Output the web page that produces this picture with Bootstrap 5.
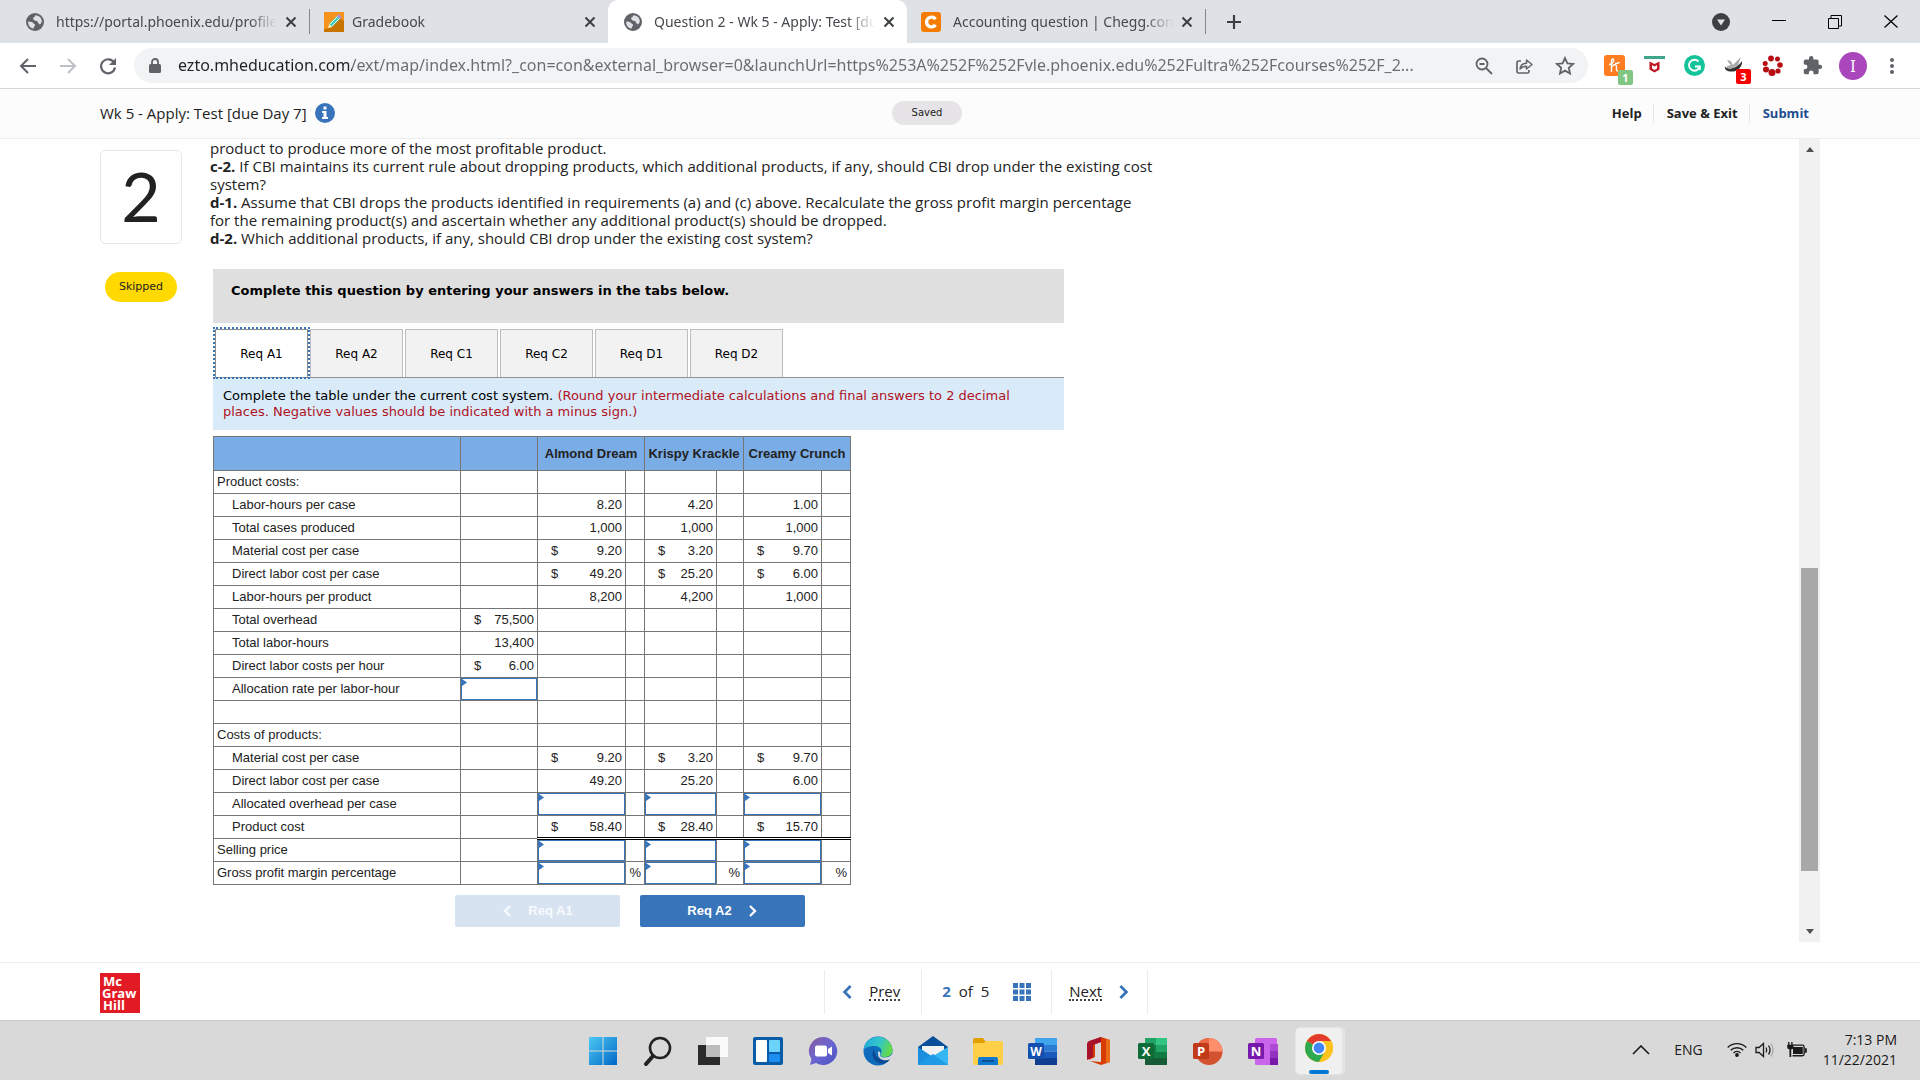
<!DOCTYPE html>
<html lang="en">
<head>
<meta charset="utf-8">
<meta name="viewport" content="width=device-width, initial-scale=1">
<title>Question 2 - Wk 5 - Apply: Test [due Day 7]</title>
<link href="https://cdn.jsdelivr.net/npm/bootstrap@5.3.0/dist/css/bootstrap.min.css" rel="stylesheet">
<style>
  :root { --ui: "Noto Sans", "Open Sans", sans-serif; --body: "Open Sans", "Noto Sans", sans-serif; --verd: "DejaVu Sans", sans-serif; --blue: #3874ba; }
  body { font-family: var(--body); color: #222; background: #fff; min-height: 100vh; }
  button { border: 0; background: none; padding: 0; color: inherit; }
  svg { display: block; flex: none; }

  /* browser tabs */
  .tab-strip { background: #dee1e6; height: 43px; font: 14px/40px var(--ui); color: #45494d; }
  .b-tab { height: 43px; }
  .b-tab .t-label { flex: 1 1 0; min-width: 0; overflow: hidden; white-space: nowrap; -webkit-mask-image: linear-gradient(to left, transparent 0, #000 28px); mask-image: linear-gradient(to left, transparent 0, #000 28px); }
  .b-tab.w-a { width: 309px; padding: 0 12px 0 26px; }
  .b-tab.w-b { width: 298px; padding: 0 12px 0 14px; }
  .b-tab.w-c { width: 299px; padding: 0 12px 0 16px; }
  .b-tab.live { background: #fff; border-radius: 10px 10px 0 0; }
  .t-rule { width: 1px; height: 25px; background: #85898e; }
  .win-btns { gap: 42px; padding-right: 22px; }

  /* toolbar */
  .tool-row { height: 45px; padding-left: 18px; padding-right: 22px; }
  .omni { background: #f1f3f4; border-radius: 18px; height: 35px; padding: 0 13px 0 14px; }
  .omni input { min-width: 0; border: 0; outline: 0; padding: 0; height: 35px; font: 16px/35px var(--ui); color: transparent; background: linear-gradient(to right, #202124 174px, #686c70 174px); -webkit-background-clip: text; background-clip: text; }
  .omni-icons { gap: 22px; }
  .ext-row { gap: 19px; }
  .ext-tag { right: -8px; bottom: -9px; width: 15px; height: 15px; border-radius: 2px; font: 700 11px/15px var(--ui); color: #fff; text-align: center; }
  .face { width: 28px; height: 28px; margin-left: -3px; border-radius: 50%; background: #ab47bc; color: #fff; font: 16px/28px var(--ui); text-align: center; }

  /* assignment header */
  .task-head { display: grid; grid-template-columns: 12fr auto 13fr; height: 51px; background: #fcfcfc; border-top: 1px solid #d5d6d8; border-bottom: 1px solid #ececec; padding: 0 100px 2px; }
  .task-title { font-size: 15px; line-height: 24px; }
  .saved { background: #e6e4e7; border-radius: 12px; width: 70px; height: 24px; font: 10px/23px var(--verd); text-align: center; }
  .head-links a { font: 700 13px/20px var(--body); color: #222; text-decoration: none; padding: 0 11px 0 13px; border-left: 1px solid #e8e8e8; }
  .head-links a:first-child { border: 0; }
  .head-links a:last-child { color: #1d4d8f; }

  /* question */
  .work { padding: 0 100px; overflow: hidden; }
  .q-side { width: 82px; margin-right: 28px; padding-top: 11px; }
  .q-num { height: 94px; border: 1px solid #e6e6e6; border-radius: 5px; font: 68px/90px "Lato", sans-serif; text-align: center; }
  .skipped { width: 72px; height: 30px; margin: 28px auto 0; border-radius: 15px; background: #ffd900; font: 11px/30px var(--verd); text-align: center; }
  .q-text { max-width: 950px; font-size: 15px; line-height: 18px; margin-bottom: 22px; }
  .q-box { width: 851px; margin-left: 3px; font-family: var(--verd); font-size: 13px; color: #000; }
  .q-intro { background: #dfdfdf; height: 54px; padding: 12px 18px; font-weight: 700; line-height: 20px; margin-bottom: 6px; }
  .req-tabs { border-bottom: 1px solid #919191; gap: 2px; padding-left: 2px; list-style: none; margin: 0; }
  .req-tabs button { width: 93px; height: 48px; border: 1px solid #bdbdbd; border-bottom: 0; background: #f2f2f2; font: 12px/48px var(--verd); }
  .req-tabs button.on { background: #fff; border-color: #8c8c8c; outline: 2px dotted var(--blue); outline-offset: 0; position: relative; z-index: 1; }
  .req-note { background: #d9ebf9; height: 52px; padding: 10px; line-height: 16px; margin-bottom: 6px; }
  .req-note span { color: #b0121f; }

  .cost { width: 638px; table-layout: fixed; border-collapse: collapse; font: 13px/16px "Liberation Sans", sans-serif; color: #222; }
  .cost th, .cost td { border: 1px solid #767676; height: 23px; padding: 0 3px; white-space: nowrap; }
  .cost thead th { background: #7aace6; height: 34px; text-align: center; font-weight: 700; padding: 0; }
  .cost tbody th { font-weight: 400; }
  .cost tbody th.in { padding-left: 18px; }
  .cost td { text-align: right; }
  .cost .cur { display: flex; justify-content: space-between; padding-left: 10px; }
  .cost td.ans { padding: 0; position: relative; }
  .cost td.ans input { display: block; width: 100%; height: 22px; border: 1px solid var(--blue); padding: 0 4px; text-align: right; background: #fff; font: inherit; }
  .cost td.ans::before { content: ""; position: absolute; left: 1px; top: 1px; width: 5px; height: 7px; background: var(--blue); clip-path: polygon(0 0, 100% 50%, 0 100%); }
  .cost .sum td:not(:nth-child(2)) { border-top: 1px solid #000; border-bottom: 3px double #000; }
  .cost .sum + tr td.ans input { height: 21px; }

  .step-btns { width: 350px; margin: 10px 0 0 242px; gap: 20px; }
  .step-btns button { width: 165px; height: 32px; border-radius: 2px; background: var(--blue); color: #fff; font: 700 13px/32px "Liberation Sans", sans-serif; }
  .step-btns button:disabled { background: #d7e3f1; color: #f8fafd; }

  .scroller { width: 21px; background: #f1f1f1; height: 803px; }
  .scroller .arr { height: 21px; }
  .scroller .grip { width: 17px; height: 303px; margin: 408px auto 0; background: #a8a8a8; }

  /* pager */
  .pager { border-top: 1px solid #ececec; height: 58px; padding: 0 40.2% 0 100px; }
  .mgh { margin-top: 2px; }
  .pager-cells > div { width: 97px; height: 44px; border-left: 1px solid #ececec; font-size: 15px; }
  .pager-cells > div.pos { width: 130px; }
  .pager-cells > div:last-child { border-right: 1px solid #ececec; }
  .pager a { color: #222; text-decoration: none; border-bottom: 2px dotted #444; line-height: 16px; }

  /* desktop taskbar */
  .win-bar { height: 60px; background: #d9d9d9; border-top: 1px solid #c9c9c9; padding: 0 23px 0 588px; color: #1a1a1a; }
  .app-row { gap: 25px; }
  .chrome-slot { width: 48px; height: 48px; margin-left: -8px; border-radius: 5px; background: #f0f0f0; border: 1px solid #e3e3e3; box-shadow: 2px 0 0 #e6e6e6; }
  .tray { font: 14px/20px var(--body); padding-bottom: 2px; }
</style>
<script src="https://cdn.jsdelivr.net/npm/bootstrap@5.3.0/dist/js/bootstrap.bundle.min.js"></script>
</head>
<body class="d-flex flex-column">

<svg width="0" height="0" class="position-absolute" aria-hidden="true">
  <symbol id="globe" viewBox="0 0 18 18"><circle cx="9" cy="9" r="9" fill="#5f6368"/><path d="M9.5 2.2c-1 .9-.4 1.600-1.500 2-.9.300-1.300 1.200-.6 1.800.6.400.3 1.400 1.300 1.600 1.600.2 3 .3 3.100 1.700.1 1.100 1.400 1 1.900 2.200 1.500-1.200 2.300-2.600 2.100-4.100A6.900 6.900 0 0 0 9.500 2.200zM2.100 8.700C2 12 4 14.900 7.200 15.700c.8-.6.400-1.700 1.300-2.400.9-.6.8-1.900-.3-2.300-1-.3-1.200-1.700-2.600-1.900-1.200-.2-2-.7-3.500-.4z" fill="#dee1e6"/></symbol>
  <symbol id="cross" viewBox="0 0 12 12"><path d="M1.500 1.500l9 9m0-9l-9 9" stroke="#3c4043" stroke-width="2" fill="none"/></symbol>
  <symbol id="chev-l" viewBox="0 0 10 12"><path d="M8 1L3 6l5 5" stroke="currentColor" stroke-width="2.300" fill="none"/></symbol>
  <symbol id="chev-r" viewBox="0 0 10 12"><path d="M2 1l5 5-5 5" stroke="currentColor" stroke-width="2.300" fill="none"/></symbol>
</svg>

<header>
  <div class="tab-strip d-flex align-items-center" role="tablist">
    <div class="b-tab w-a d-flex align-items-center" role="tab">
      <svg width="18" height="18" class="me-2"><use href="#globe"/></svg>
      <span class="t-label ms-1">https://portal.phoenix.edu/profile</span>
      <button type="button" class="ms-2" aria-label="Close tab"><svg width="12" height="12"><use href="#cross"/></svg></button>
    </div>
    <div class="t-rule"></div>
    <div class="b-tab w-b d-flex align-items-center" role="tab">
      <svg width="20" height="20" viewBox="0 0 20 20" class="me-2"><path fill="#f7941d" d="M0 0h20v20H0z"/><path fill="#c87400" d="M6 16L16 6l4 3v11H0v-3z"/><path d="M4.500 15.500l1-4L14 3l3 3-8.500 8.500z" fill="#3fd0c0"/><path d="M6 12l8-8m-6 10l8-8" stroke="#e8fbe0" stroke-width="1"/><path d="M13 4l1.800-1.800 3 3L16 7z" fill="#b58ad8"/><path d="M4 16l1.300-4 3 3z" fill="#fff0b0"/></svg>
      <span class="t-label">Gradebook</span>
      <button type="button" aria-label="Close tab"><svg width="12" height="12"><use href="#cross"/></svg></button>
    </div>
    <div class="b-tab w-c live d-flex align-items-center" role="tab" aria-selected="true">
      <svg width="18" height="18" class="me-2"><use href="#globe"/></svg>
      <span class="t-label ms-1">Question 2 - Wk 5 - Apply: Test [due Day 7]</span>
      <button type="button" class="ms-2" aria-label="Close tab"><svg width="12" height="12"><use href="#cross"/></svg></button>
    </div>
    <div class="b-tab w-b d-flex align-items-center" role="tab">
      <svg width="20" height="20" viewBox="0 0 20 20" class="me-2"><rect width="20" height="20" rx="3" fill="#f57c00"/><path d="M14.500 7.200A4.900 4.900 0 1 0 14.500 12.800" fill="none" stroke="#fff" stroke-width="3.400"/></svg>
      <span class="t-label ms-1">Accounting question | Chegg.com</span>
      <button type="button" class="ms-2" aria-label="Close tab"><svg width="12" height="12"><use href="#cross"/></svg></button>
    </div>
    <div class="t-rule"></div>
    <button type="button" class="ms-3 ps-1" aria-label="New tab"><svg width="16" height="16" viewBox="0 0 16 16"><path d="M8 1v14M1 8h14" stroke="#3c4043" stroke-width="2.200"/></svg></button>
    <div class="win-btns d-flex align-items-center ms-auto">
      <svg width="18" height="18" viewBox="0 0 18 18"><circle cx="9" cy="9" r="9" fill="#3c4043"/><path d="M5 6.500h8L9 12.500z" fill="#dee1e6"/></svg>
      <svg width="14" height="14" viewBox="0 0 14 14"><path d="M0 5.500h14" stroke="#000"/></svg>
      <svg width="14" height="14" viewBox="0 0 14 14"><path d="M.5 3.500h10v10H.5zM3 3V.5h10.500V11H11" fill="none" stroke="#000"/></svg>
      <svg width="14" height="14" viewBox="0 0 14 14"><path d="M.5.5l13 12m0-12l-13 12" stroke="#000" stroke-width="1.200"/></svg>
    </div>
  </div>

  <div class="tool-row d-flex align-items-center">
    <button type="button" aria-label="Back"><svg width="20" height="20" viewBox="0 0 20 20"><path d="M18 10H3m7-7l-7 7 7 7" fill="none" stroke="#5f6368" stroke-width="2"/></svg></button>
    <button type="button" class="mx-3 px-1" aria-label="Forward" disabled><svg width="20" height="20" viewBox="0 0 20 20"><path d="M2 10h15m-7-7l7 7-7 7" fill="none" stroke="#bdc1c6" stroke-width="2"/></svg></button>
    <button type="button" class="me-3" aria-label="Reload"><svg width="20" height="20" viewBox="0 0 20 20"><path d="M16 6.500A7 7 0 1 0 17 11.500" fill="none" stroke="#5f6368" stroke-width="2.200"/><path d="M18 2v7h-7z" fill="#5f6368"/></svg></button>
    <label class="omni d-flex align-items-center flex-grow-1">
      <svg width="14" height="16" viewBox="0 0 14 16" class="me-3"><rect x="1" y="6" width="12" height="9" rx="1.500" fill="#5f6368"/><path d="M4 7V4a3 3 0 0 1 6 0v3" fill="none" stroke="#5f6368" stroke-width="1.800"/></svg>
      <input class="flex-grow-1" type="text" aria-label="Address" value="ezto.mheducation.com/ext/map/index.html?_con=con&amp;external_browser=0&amp;launchUrl=https%253A%252F%252Fvle.phoenix.edu%252Fultra%252Fcourses%252F_2...">
      <span class="omni-icons d-flex align-items-center">
        <svg width="18" height="18" viewBox="0 0 18 18"><circle cx="7" cy="7" r="5.500" fill="none" stroke="#5f6368" stroke-width="1.800"/><path d="M11 11l6 6M4.500 7h5" stroke="#5f6368" stroke-width="1.800"/></svg>
        <svg width="18" height="18" viewBox="0 0 18 18"><path d="M6 4H3.500Q2 4 2 5.500v9Q2 16 3.500 16h9q1.500 0 1.500-1.500V13" fill="none" stroke="#5f6368" stroke-width="1.700"/><path d="M5 12c.5-4 3-5.700 6.500-5.700V3L17 7.500 11.500 12V9.200C8.800 9.200 7 10 5 12z" fill="none" stroke="#5f6368" stroke-width="1.500" stroke-linejoin="round"/></svg>
        <svg width="20" height="20" viewBox="0 0 20 20"><path d="M10 2l2.400 5.300 5.700.6-4.300 3.900 1.200 5.700-5-2.900-5 2.900 1.200-5.700L1.900 7.900l5.700-.6z" fill="none" stroke="#5f6368" stroke-width="1.800"/></svg>
      </span>
    </label>
    <div class="ext-row d-flex align-items-center ms-3">
      <span class="position-relative"><svg width="21" height="21" viewBox="0 0 21 21"><rect width="21" height="21" rx="3" fill="#ff7d22"/><path d="M7.500 17V5.500c0-2 3-2 2 .5S6 9.500 5 9.500m2.500 3c1-3 5-4 5-1 0 2-.5 5 1.500 4.500m-3-7.500c3 0 4 0 4.500-1.500" fill="none" stroke="#fff" stroke-width="1.400"/></svg><span class="ext-tag position-absolute" style="background:#81c784">1</span></span>
      <svg width="21" height="21" viewBox="0 0 21 21"><path fill="#3fa58b" d="M0 1h21v3H0z"/><path d="M5.500 6.500l5 2.500 5-2.500v8l-5 3-5-3z" fill="#c01722"/><path d="M8 10l2.500 1.500L13 10v3.500l-2.500 1.500L8 13.500z" fill="#fff"/></svg>
      <svg width="21" height="21" viewBox="0 0 21 21"><circle cx="10.500" cy="10.500" r="10.500" fill="#15c39a"/><path d="M14.500 6.500a5.500 5.500 0 1 0 1.300 5H11m4.800 0V15" fill="none" stroke="#fff" stroke-width="1.900"/></svg>
      <span class="position-relative"><svg width="19" height="19" viewBox="0 0 19 19"><path d="M1 10.500C3 14 13 13 18 5c.5 6-4 10-9 10.500S0 14 1 10.500z" fill="#333"/><path d="M3 4c4 0 5 3 6 5L17 1l-3 8-7 4c-3 0-5-2-4-3l4-1C5 7 4 6 3 4z" fill="#a9a9a9"/></svg><span class="ext-tag position-absolute" style="background:#f90000">3</span></span>
      <svg width="21" height="21" viewBox="0 0 21 21" fill="#b50d12"><circle cx="9" cy="3.500" r="2.900"/><circle cx="15.500" cy="4" r="2.500"/><circle cx="18" cy="10" r="2.800"/><circle cx="16" cy="16" r="2.600"/><circle cx="10" cy="17.500" r="3.500"/><circle cx="4" cy="14.500" r="3"/><circle cx="3.200" cy="8.500" r="2.500"/></svg>
      <svg width="21" height="21" viewBox="0 0 24 24" fill="#5f6368"><path d="M20.500 11H19V7a2 2 0 0 0-2-2h-4V3.500a2.500 2.500 0 0 0-5 0V5H4a2 2 0 0 0-2 2v3.800h1.500a2.700 2.700 0 0 1 0 5.400H2V20c0 1.100.9 2 2 2h3.800v-1.500a2.700 2.700 0 0 1 5.400 0V22H17a2 2 0 0 0 2-2v-4h1.500a2.500 2.500 0 0 0 0-5z"/></svg>
      <div class="face">I</div>
      <svg width="12" height="18" viewBox="0 0 12 18" fill="#5f6368"><circle cx="6" cy="3" r="2"/><circle cx="6" cy="9" r="2"/><circle cx="6" cy="15" r="2"/></svg>
    </div>
  </div>
</header>

<section class="task-head align-items-center">
  <div class="d-flex align-items-center task-title">Wk 5 - Apply: Test [due Day 7]
    <svg width="20" height="20" viewBox="0 0 20 20" class="ms-2"><circle cx="10" cy="10" r="10" fill="#3874ba"/><path d="M8.500 3.500h3v3h-3zM7 8h4.500v6H13v2H7v-2h1.500v-4H7z" fill="#fff"/></svg>
  </div>
  <div class="saved">Saved</div>
  <nav class="head-links d-flex justify-content-end"><a href="#">Help</a><a href="#">Save &amp; Exit</a><a href="#">Submit</a></nav>
</section>

<main class="work d-flex flex-grow-1">
  <aside class="q-side flex-shrink-0">
    <div class="q-num">2</div>
    <div class="skipped">Skipped</div>
  </aside>

  <div class="flex-grow-1">
    <p class="q-text">product to produce more of the most profitable product.<br>
      <b>c-2.</b> If CBI maintains its current rule about dropping products, which additional products, if any, should CBI drop under the existing cost<br>system?<br>
      <b>d-1.</b> Assume that CBI drops the products identified in requirements (a) and (c) above. Recalculate the gross profit margin percentage<br>for the remaining product(s) and ascertain whether any additional product(s) should be dropped.<br>
      <b>d-2.</b> Which additional products, if any, should CBI drop under the existing cost system?</p>

    <div class="q-box">
      <div class="q-intro">Complete this question by entering your answers in the tabs below.</div>
      <ul class="req-tabs d-flex" role="tablist">
        <li><button type="button" role="tab" class="on" aria-selected="true">Req A1</button></li>
        <li><button type="button" role="tab">Req A2</button></li>
        <li><button type="button" role="tab">Req C1</button></li>
        <li><button type="button" role="tab">Req C2</button></li>
        <li><button type="button" role="tab">Req D1</button></li>
        <li><button type="button" role="tab">Req D2</button></li>
      </ul>
      <div class="req-note">Complete the table under the current cost system. <span>(Round your intermediate calculations and final answers to 2 decimal<br>places. Negative values should be indicated with a minus sign.)</span></div>

      <table class="cost">
        <colgroup><col style="width:247px"><col style="width:77px"><col style="width:88px"><col style="width:19px"><col style="width:72px"><col style="width:27px"><col style="width:78px"><col style="width:29px"></colgroup>
        <thead><tr><th></th><th></th><th colspan="2" scope="col">Almond Dream</th><th colspan="2" scope="col">Krispy Krackle</th><th colspan="2" scope="col">Creamy Crunch</th></tr></thead>
        <tbody>
          <tr><th>Product costs:</th><td></td><td></td><td></td><td></td><td></td><td></td><td></td></tr>
          <tr><th class="in">Labor-hours per case</th><td></td><td>8.20</td><td></td><td>4.20</td><td></td><td>1.00</td><td></td></tr>
          <tr><th class="in">Total cases produced</th><td></td><td>1,000</td><td></td><td>1,000</td><td></td><td>1,000</td><td></td></tr>
          <tr><th class="in">Material cost per case</th><td></td><td><span class="cur"><i class="fst-normal">$</i>9.20</span></td><td></td><td><span class="cur"><i class="fst-normal">$</i>3.20</span></td><td></td><td><span class="cur"><i class="fst-normal">$</i>9.70</span></td><td></td></tr>
          <tr><th class="in">Direct labor cost per case</th><td></td><td><span class="cur"><i class="fst-normal">$</i>49.20</span></td><td></td><td><span class="cur"><i class="fst-normal">$</i>25.20</span></td><td></td><td><span class="cur"><i class="fst-normal">$</i>6.00</span></td><td></td></tr>
          <tr><th class="in">Labor-hours per product</th><td></td><td>8,200</td><td></td><td>4,200</td><td></td><td>1,000</td><td></td></tr>
          <tr><th class="in">Total overhead</th><td><span class="cur"><i class="fst-normal">$</i>75,500</span></td><td></td><td></td><td></td><td></td><td></td><td></td></tr>
          <tr><th class="in">Total labor-hours</th><td>13,400</td><td></td><td></td><td></td><td></td><td></td><td></td></tr>
          <tr><th class="in">Direct labor costs per hour</th><td><span class="cur"><i class="fst-normal">$</i>6.00</span></td><td></td><td></td><td></td><td></td><td></td><td></td></tr>
          <tr><th class="in">Allocation rate per labor-hour</th><td class="ans"><input type="text" aria-label="Allocation rate per labor-hour"></td><td></td><td></td><td></td><td></td><td></td><td></td></tr>
          <tr><th></th><td></td><td></td><td></td><td></td><td></td><td></td><td></td></tr>
          <tr><th>Costs of products:</th><td></td><td></td><td></td><td></td><td></td><td></td><td></td></tr>
          <tr><th class="in">Material cost per case</th><td></td><td><span class="cur"><i class="fst-normal">$</i>9.20</span></td><td></td><td><span class="cur"><i class="fst-normal">$</i>3.20</span></td><td></td><td><span class="cur"><i class="fst-normal">$</i>9.70</span></td><td></td></tr>
          <tr><th class="in">Direct labor cost per case</th><td></td><td>49.20</td><td></td><td>25.20</td><td></td><td>6.00</td><td></td></tr>
          <tr><th class="in">Allocated overhead per case</th><td></td><td class="ans"><input type="text" aria-label="Allocated overhead, Almond Dream"></td><td></td><td class="ans"><input type="text" aria-label="Allocated overhead, Krispy Krackle"></td><td></td><td class="ans"><input type="text" aria-label="Allocated overhead, Creamy Crunch"></td><td></td></tr>
          <tr class="sum"><th class="in">Product cost</th><td></td><td><span class="cur"><i class="fst-normal">$</i>58.40</span></td><td></td><td><span class="cur"><i class="fst-normal">$</i>28.40</span></td><td></td><td><span class="cur"><i class="fst-normal">$</i>15.70</span></td><td></td></tr>
          <tr><th>Selling price</th><td></td><td class="ans"><input type="text" aria-label="Selling price, Almond Dream"></td><td></td><td class="ans"><input type="text" aria-label="Selling price, Krispy Krackle"></td><td></td><td class="ans"><input type="text" aria-label="Selling price, Creamy Crunch"></td><td></td></tr>
          <tr><th>Gross profit margin percentage</th><td></td><td class="ans"><input type="text" aria-label="Gross profit margin, Almond Dream"></td><td>%</td><td class="ans"><input type="text" aria-label="Gross profit margin, Krispy Krackle"></td><td>%</td><td class="ans"><input type="text" aria-label="Gross profit margin, Creamy Crunch"></td><td>%</td></tr>
        </tbody>
      </table>

      <div class="step-btns d-flex">
        <button type="button" disabled class="d-flex align-items-center justify-content-center"><svg width="10" height="12" class="me-3"><use href="#chev-l"/></svg>Req A1</button>
        <button type="button" class="d-flex align-items-center justify-content-center">Req A2<svg width="10" height="12" class="ms-3"><use href="#chev-r"/></svg></button>
      </div>
    </div>
  </div>

  <div class="scroller flex-shrink-0 d-flex flex-column">
    <div class="arr d-flex align-items-center justify-content-center"><svg width="8" height="5" viewBox="0 0 8 5"><path d="M0 5l4-5 4 5z" fill="#505050"/></svg></div>
    <div class="grip"></div>
    <div class="arr d-flex align-items-center justify-content-center mt-auto"><svg width="8" height="5" viewBox="0 0 8 5"><path d="M0 0l4 5 4-5z" fill="#505050"/></svg></div>
  </div>
</main>

<footer>
  <div class="pager d-flex align-items-center justify-content-between">
    <svg width="40" height="40" viewBox="0 0 40 40" class="mgh"><path fill="#e21a23" d="M0 0h40v40H0z"/><g fill="#fff" font-family="Open Sans, sans-serif" font-weight="700" font-size="13"><text x="3" y="13">Mc</text><text x="2" y="25">Graw</text><text x="3" y="37">Hill</text></g></svg>
    <nav class="pager-cells d-flex">
      <div class="d-flex align-items-center px-3"><svg width="12" height="16" viewBox="0 0 10 12" class="me-3" color="#3874ba"><use href="#chev-l"/></svg><a href="#">Prev</a></div>
      <div class="pos d-flex align-items-center px-3 gap-2"><b class="ms-1" style="color:#3874ba">2</b>of<span>5</span>
        <svg width="18" height="18" viewBox="0 0 18 18" class="ms-3" fill="#3874ba"><path d="M0 0h5v5H0zM6.500 0h5v5h-5zM13 0h5v5h-5zM0 6.500h5v5H0zM6.500 6.500h5v5h-5zM13 6.500h5v5h-5zM0 13h5v5H0zM6.500 13h5v5h-5zM13 13h5v5h-5z"/></svg></div>
      <div class="d-flex align-items-center justify-content-center"><a href="#">Next</a><svg width="12" height="16" viewBox="0 0 10 12" class="ms-3" color="#3874ba"><use href="#chev-r"/></svg></div>
    </nav>
  </div>

  <div class="win-bar d-flex align-items-center">
    <div class="app-row d-flex align-items-center">
      <svg width="30" height="30" viewBox="0 0 30 30"><defs><linearGradient id="gw" x1="0" y1="0" x2="1" y2="1"><stop stop-color="#4cc9f5"/><stop offset="1" stop-color="#0067c6"/></linearGradient></defs><path fill="url(#gw)" d="M1 1h13.500v13.500H1zM15.500 1H29v13.500H15.500zM1 15.500h13.500V29H1zM15.500 15.500H29V29H15.500z"/></svg>
      <svg width="30" height="30" viewBox="0 0 30 30"><circle cx="17" cy="12" r="10" fill="none" stroke="#222" stroke-width="2.600"/><path d="M10 20l-7 8" stroke="#222" stroke-width="4" stroke-linecap="round"/></svg>
      <svg width="30" height="30" viewBox="0 0 30 30"><path fill="#2b2b2b" d="M0 9h22v20H0z"/><path fill="#fafafa" d="M8 1h22v20H8z"/><path fill="#bdbdbd" d="M8 9h14v12H8z"/></svg>
      <svg width="30" height="30" viewBox="0 0 30 30"><rect y="1" width="30" height="28" rx="2" fill="#0a5ca8"/><rect x="3" y="4" width="11" height="22" rx="1" fill="#fff"/><rect x="16" y="4" width="11" height="12" rx="1" fill="#6cd3fb"/><rect x="16" y="18" width="11" height="8" rx="1" fill="#1d8ff0"/></svg>
      <svg width="30" height="30" viewBox="0 0 30 30"><defs><linearGradient id="gt" x1="0" y1="0" x2="1" y2="1"><stop stop-color="#8a5a9e"/><stop offset=".5" stop-color="#6a66d0"/><stop offset="1" stop-color="#4b51c4"/></linearGradient></defs><path d="M15 1a14 14 0 1 1-7 26l-6 2 1.500-6A14 14 0 0 1 15 1z" fill="url(#gt)"/><rect x="7" y="9.500" width="12" height="11" rx="2" fill="#fff"/><path d="M20 13l4-2.500v9L20 17z" fill="#fff"/></svg>
      <svg width="30" height="30" viewBox="0 0 30 30"><defs><linearGradient id="ge" x1="0" y1="0" x2="1" y2=".3"><stop stop-color="#1fa6e0"/><stop offset=".6" stop-color="#34c8c8"/><stop offset="1" stop-color="#62d84e"/></linearGradient></defs><circle cx="15" cy="15" r="14.500" fill="#0f6cbd"/><path d="M.6 14A14.500 14.500 0 0 1 29.500 14c0 5-4 7-8 7-3 0-4.500-1-3.500-3 2-4-1-8-6-8C6 10 1.500 12 .6 14z" fill="url(#ge)"/><path d="M11 13c-4 6 0 14 9 15 3-1 6-3 7-5-8 3-15 0-16-10z" fill="#0c4a94"/><path d="M17.500 18c-1 2 .5 3.500 4 3.500 3 0 6-1 8-4v5l-2.500 1c-6 2-12 0-12-6 0-3 2-3 2.500.5z" fill="#d9d9d9"/></svg>
      <svg width="30" height="30" viewBox="0 0 30 30"><path d="M0 11L15 0l15 11v5H0z" fill="#0a4f9a"/><path d="M4 10h22v10H4z" fill="#f2f2f2"/><path d="M0 11l15 10L0 29z" fill="#1b8fdd"/><path d="M30 11v18H0z" fill="#36b6f2"/><path d="M0 29l15-11 15 11z" fill="#1e9ae6"/></svg>
      <svg width="30" height="30" viewBox="0 0 30 30"><path d="M0 4q0-2 2-2h8l3 4H28q2 0 2 2v4H0z" fill="#e0a100"/><path d="M0 9q0-2 2-2l9 0 2-2h15q2 0 2 2v20q0 2-2 2H2q-2 0-2-2z" fill="#ffcf48"/><path d="M5 29v-6q0-2 2-2h16q2 0 2 2v6z" fill="#0f78cf"/><path d="M9 25h12" stroke="#07467f" stroke-width="1.500"/></svg>
      <svg width="30" height="30" viewBox="0 0 30 30"><path fill="#41a5ee" d="M7 2h22v7H7z"/><path fill="#2b7cd3" d="M7 9h22v6.500H7z"/><path fill="#185abd" d="M7 15.500h22V22H7z"/><path fill="#103f91" d="M7 22h22v7H7z"/><rect y="7" width="16" height="16" rx="1.500" fill="#1350b0"/><text x="8" y="20" font-size="12" font-weight="700" font-family="Open Sans, sans-serif" fill="#fff" text-anchor="middle">W</text></svg>
      <svg width="30" height="30" viewBox="0 0 30 30"><path d="M18 1l9 3v22l-9 3-11-4 11 1V6l-6 2v13l-6 3V8q0-2 2-3z" fill="#d83b01"/><path d="M18 1L6 5Q4 6 4 8v16l6-3V9l8-3z" fill="#a8112a"/><path d="M18 29l9-3V4l-4-1.500V27z" fill="#ec6b1a"/></svg>
      <svg width="30" height="30" viewBox="0 0 30 30"><path fill="#21a366" d="M7 2h11v14H7z"/><path fill="#33c481" d="M18 2h11v7H18z"/><path fill="#21a366" d="M18 9h11v7H18z"/><path fill="#107c41" d="M7 9h11v13H7z"/><path fill="#185c37" d="M7 22h22v7H7z"/><path fill="#107c41" d="M18 16h11v6H18z"/><rect y="7" width="16" height="16" rx="1.500" fill="#0d6b38"/><text x="8" y="20" font-size="13" font-weight="700" font-family="Open Sans, sans-serif" fill="#fff" text-anchor="middle">X</text></svg>
      <svg width="30" height="30" viewBox="0 0 30 30"><circle cx="16" cy="15.500" r="13.500" fill="#d35230"/><path d="M16 2a13.500 13.500 0 0 1 13.500 13.500H16z" fill="#ff8f6b"/><path d="M16 2A13.500 13.500 0 0 0 2.500 15.500H16z" fill="#ed6c47"/><rect y="7" width="16" height="16" rx="1.500" fill="#c13b1b"/><text x="8" y="20" font-size="13" font-weight="700" font-family="Open Sans, sans-serif" fill="#fff" text-anchor="middle">P</text></svg>
      <svg width="30" height="30" viewBox="0 0 30 30"><rect x="7" y="2" width="22" height="27" rx="1.500" fill="#ca64ea"/><path fill="#ae4bd5" d="M22 8h8v7h-8z"/><path fill="#9332bf" d="M22 15h8v7h-8z"/><path fill="#7719aa" d="M22 22h8v7h-8z"/><rect y="7" width="16" height="16" rx="1.500" fill="#7719aa"/><text x="8" y="20" font-size="13" font-weight="700" font-family="Open Sans, sans-serif" fill="#fff" text-anchor="middle">N</text></svg>
      <div class="chrome-slot d-flex flex-column align-items-center justify-content-end">
        <svg width="28" height="28" viewBox="0 0 28 28" class="mb-2"><circle cx="14" cy="14" r="14" fill="#fbc116"/><path d="M14 14L1.900 7A14 14 0 0 1 26.100 7z" fill="#e33b2e"/><path d="M14 14L1.900 7A14 14 0 0 0 14 28l6-10.500z" fill="#2da94f"/><path d="M14 7h12.100A14 14 0 0 1 14 28l6.100-10.500z" fill="#fcc31e"/><circle cx="14" cy="14" r="7" fill="#fff"/><circle cx="14" cy="14" r="5.400" fill="#4285f4"/></svg>
        <svg width="20" height="4"><rect width="20" height="4" rx="2" fill="#0078d4"/></svg>
      </div>
    </div>
    <div class="tray d-flex align-items-center ms-auto">
      <svg width="18" height="10" viewBox="0 0 18 10"><path d="M1 9l8-8 8 8" fill="none" stroke="#1a1a1a" stroke-width="1.600"/></svg>
      <span class="mx-4">ENG</span>
      <svg width="20" height="15" viewBox="0 0 20 15" fill="none" stroke="#1a1a1a" stroke-width="1.400"><path d="M.7 5.500a13 13 0 0 1 18.600 0M3.700 8.300a9 9 0 0 1 12.600 0M6.500 11a5 5 0 0 1 7 0"/><circle cx="10" cy="13" r="1.200" fill="#1a1a1a"/></svg>
      <svg width="20" height="16" viewBox="0 0 20 16" fill="none" stroke="#1a1a1a" stroke-width="1.300" class="mx-2"><path d="M1 5.500h3L8.500 1.500v13L4 10.500H1zM11 5.500q1.500 2.500 0 5M13.500 3.500q3 4.500 0 9"/><path d="M16 1.500q4 6.500 0 13" stroke="#aaa"/></svg>
      <svg width="20" height="16" viewBox="0 0 22 18" class="ms-1"><path d="M6 3.500h11q2 0 2 2v8q0 2-2 2H6" fill="none" stroke="#1a1a1a" stroke-width="1.500"/><path d="M6.500 5.500h11v8h-11zM20 7h2v5h-2z" fill="#1a1a1a"/><path d="M0 3h7v3q0 2-2.500 2.500V17h-2V8.500Q0 8 0 6zM1 0h1.500v3H1zM4.500 0H6v3H4.500z" fill="#1a1a1a"/></svg>
      <div class="text-end ms-3">7:13 PM<br>11/22/2021</div>
    </div>
  </div>
</footer>
</body>
</html>
